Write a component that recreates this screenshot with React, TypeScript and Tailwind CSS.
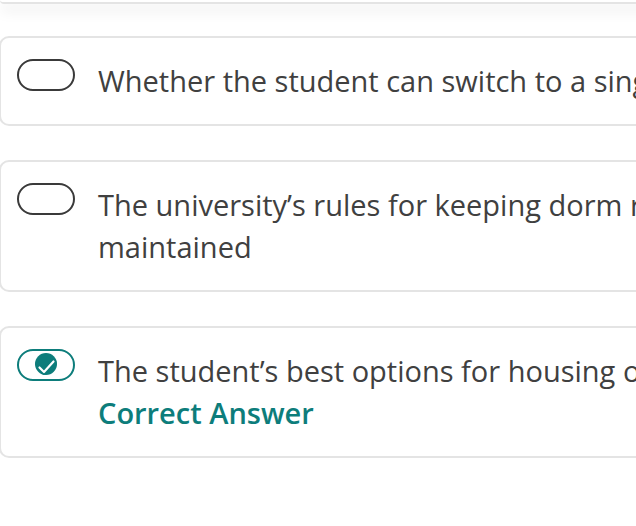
import React from "react";

function Pill({ checked }: { checked?: boolean }) {
  if (checked) {
    return (
      <div className="w-[58px] h-[32px] shrink-0 rounded-full border-2 border-[#0d7d7b] flex items-center justify-center -mt-px">
        <svg width="30" height="30" viewBox="0 0 30 30">
          <circle cx="15" cy="14" r="11" fill="#0d7d7b" />
          <path d="M8.5 17.5 L13 22 L22.5 11.5" fill="none" stroke="#0d7d7b" strokeWidth="5.5" strokeLinecap="round" strokeLinejoin="round" />
          <path d="M8.5 17.5 L13 22 L22.5 11.5" fill="none" stroke="#ffffff" strokeWidth="2.2" strokeLinecap="round" strokeLinejoin="round" />
        </svg>
      </div>
    );
  }
  return <div className="w-[58px] h-[32px] shrink-0 rounded-full border-2 border-[#3a3a3a] -mt-px" />;
}

function Card({ children, checked }: { children: React.ReactNode; checked?: boolean }) {
  return (
    <div className="w-[720px] rounded-[10px] border-2 border-[#e4e4e4] bg-white pl-[16px] pr-4 py-[22px] flex items-start gap-[23px]">
      <Pill checked={checked} />
      <div className="flex-1 text-[29px] leading-[42px] text-[#404040]">{children}</div>
    </div>
  );
}

export default function App() {
  return (
    <div className="w-[636px] h-[526px] overflow-hidden bg-white" style={{ fontFamily: '"Open Sans", sans-serif' }}>
      <div className="w-[720px] h-[4px] bg-white border-b-2 border-[#e4e4e4] rounded-b-[10px] shadow-[0_6px_14px_rgba(0,0,0,0.13)]" />
      <div className="flex flex-col gap-[34px] mt-[32px] -ml-px">
        <Card>
          <div className="whitespace-nowrap">Whether the student can switch to a single room</div>
        </Card>
        <Card>
          <div className="w-[600px]">
            <div className="whitespace-nowrap">The university’s rules for keeping dorm rooms</div>
            <div>maintained</div>
          </div>
        </Card>
        <Card checked>
          <div className="whitespace-nowrap">The student’s best options for housing on campus</div>
          <div className="font-semibold text-[#0d7d7b]">Correct Answer</div>
        </Card>
      </div>
    </div>
  );
}
